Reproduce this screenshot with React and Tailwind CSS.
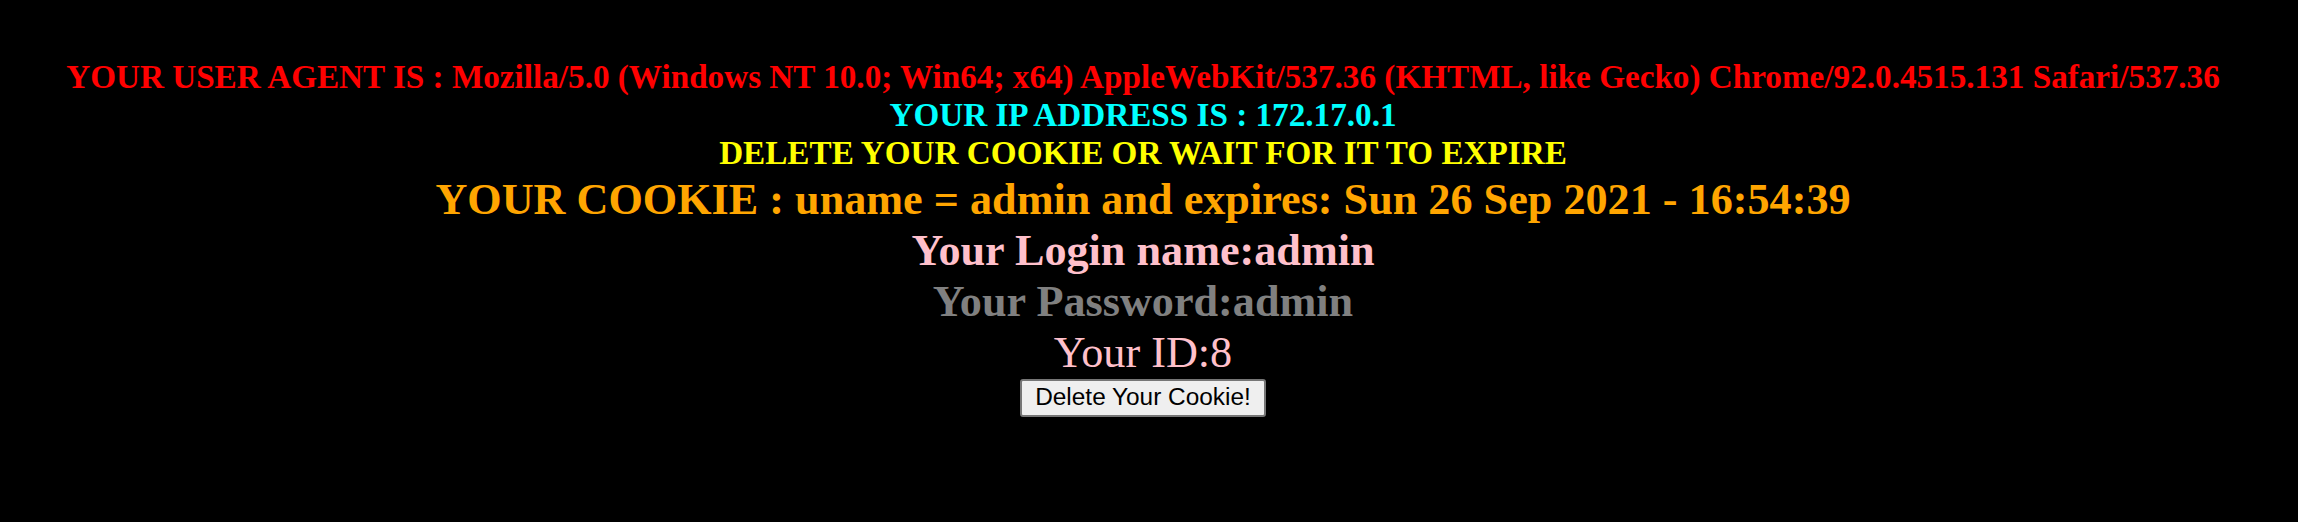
export default function App() {
  return (
    <div className="min-h-[522px] w-full bg-black text-center font-bold" style={{ fontFamily: '"Liberation Serif", serif' }}>
      <div className="pt-[58px] pr-[12px]">
        <div className="text-[33.2px] leading-[38px] text-[#ff0000]">YOUR USER AGENT IS : Mozilla/5.0 (Windows NT 10.0; Win64; x64) AppleWebKit/537.36 (KHTML, like Gecko) Chrome/92.0.4515.131 Safari/537.36</div>
        <div className="text-[33.2px] leading-[38px] text-[#00ffff]">YOUR IP ADDRESS IS : 172.17.0.1</div>
        <div className="text-[33.2px] leading-[38px] text-[#ffff00]">DELETE YOUR COOKIE OR WAIT FOR IT TO EXPIRE</div>
        <div className="mt-[1.5px] text-[44.2px] leading-[51.3px] text-[#ffa500]">YOUR COOKIE : uname = admin and expires: Sun 26 Sep 2021 - 16:54:39</div>
        <div className="text-[44.2px] leading-[51.3px] text-[#ffc0cb]">Your Login name:admin</div>
        <div className="text-[44.2px] leading-[51.3px] text-[#808080]">Your Password:admin</div>
        <div className="text-[44.2px] leading-[51.3px] font-normal text-[#ffc0cb]">Your ID:8</div>
        <div className="flex justify-center">
          <button className="h-[38px] rounded-[3px] border-2 border-[#767676] bg-[#efefef] px-[13px] text-[24.4px] leading-none font-normal text-black" style={{ fontFamily: '"Liberation Sans", sans-serif' }}>Delete Your Cookie!</button>
        </div>
      </div>
    </div>
  );
}
